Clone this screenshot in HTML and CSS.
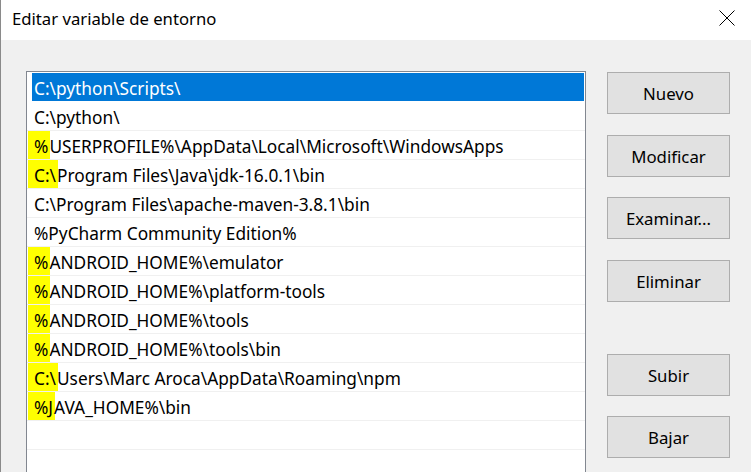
FILE: index.html
```html
<!DOCTYPE html>
<html lang="es">
<head>
<meta charset="utf-8">
<title>Editar variable de entorno</title>
<link rel="stylesheet" href="styles.css">
</head>
<body>
<div class="window">
  <div class="titlebar">
    <span class="title">Editar variable de entorno</span>
    <svg class="close" width="16" height="16" viewBox="0 0 16 16"><path d="M0.5 0.5 L15.5 15.5 M15.5 0.5 L0.5 15.5" stroke="#000" stroke-width="1" fill="none"/></svg>
  </div>
  <div class="content">
    <div class="list">
      <div class="row sel">C:\python\Scripts\</div>
      <div class="row">C:\python\</div>
      <div class="row"><span class="hl">%</span>USERPROFILE%\AppData\Local\Microsoft\WindowsApps</div>
      <div class="row"><span class="hl">C:\</span>Program Files\Java\jdk-16.0.1\bin</div>
      <div class="row">C:\Program Files\apache-maven-3.8.1\bin</div>
      <div class="row">%PyCharm Community Edition%</div>
      <div class="row"><span class="hl">%</span>ANDROID_HOME%\emulator</div>
      <div class="row"><span class="hl">%</span>ANDROID_HOME%\platform-tools</div>
      <div class="row"><span class="hl">%</span>ANDROID_HOME%\tools</div>
      <div class="row"><span class="hl">%</span>ANDROID_HOME%\tools\bin</div>
      <div class="row"><span class="hl">C:\</span>Users\Marc Aroca\AppData\Roaming\npm</div>
      <div class="row"><span class="hl">%J</span>AVA_HOME%\bin</div>
      <div class="row"></div>
      <div class="row"></div>
    </div>
    <div class="buttons">
      <button class="btn">Nuevo</button>
      <button class="btn b2">Modificar</button>
      <button class="btn b3">Examinar...</button>
      <button class="btn b4">Eliminar</button>
      <button class="btn b5">Subir</button>
      <button class="btn b6">Bajar</button>
    </div>
  </div>
</div>
</body>
</html>
```
FILE: styles.css
```css
html, body {
  margin: 0;
  padding: 0;
}
body {
  width: 751px;
  height: 472px;
  overflow: hidden;
  font-family: "Noto Sans", "Open Sans", sans-serif;
  color: #000;
}
.window {
  height: 472px;
  border-left: 1px solid #8a8a8a;
  box-sizing: border-box;
  display: flex;
  flex-direction: column;
}
.titlebar {
  height: 40px;
  flex: none;
  background: #fff;
  display: flex;
  align-items: center;
  justify-content: space-between;
  padding-left: 11px;
  padding-right: 16px;
}
.title {
  font-size: 16.7px;
  margin-top: -4px;
}
.close {
  margin-top: -5px;
}
.content {
  flex: 1;
  background: #f0f0f0;
  display: flex;
  align-items: flex-start;
  padding: 31px 0 0 25px;
  gap: 21px;
  overflow: hidden;
}
.list {
  width: 560px;
  height: 440px;
  flex: none;
  box-sizing: border-box;
  border: 1px solid #828790;
  background: #fff;
  padding-top: 1px;
}
.row {
  height: 28px;
  line-height: 31px;
  border-bottom: 1px solid #f0f0f0;
  padding-left: 7px;
  font-size: 17.3px;
  white-space: nowrap;
  overflow: hidden;
}
.row.sel {
  background: #0078d7;
  color: #fff;
  margin: 0 1px 0 5px;
  padding-left: 2px;
  border-bottom-color: #fff;
}
.hl {
  background: #ffff00;
  padding: 5px 2px 5px 6px;
  margin-left: -6px;
  margin-right: -1px;
}
.buttons {
  width: 123px;
  display: flex;
  flex-direction: column;
  padding-top: 1px;
}
.btn {
  height: 42px;
  width: 123px;
  box-sizing: border-box;
  background: #e1e1e1;
  border: 1px solid #adadad;
  font-family: "Noto Sans", "Open Sans", sans-serif;
  font-size: 16.8px;
  color: #000;
  padding: 0;
}
.b2 { margin-top: 21px; }
.b3 { margin-top: 20px; }
.b4 { margin-top: 21px; }
.b5 { margin-top: 52px; }
.b6 { margin-top: 20px; }
```
